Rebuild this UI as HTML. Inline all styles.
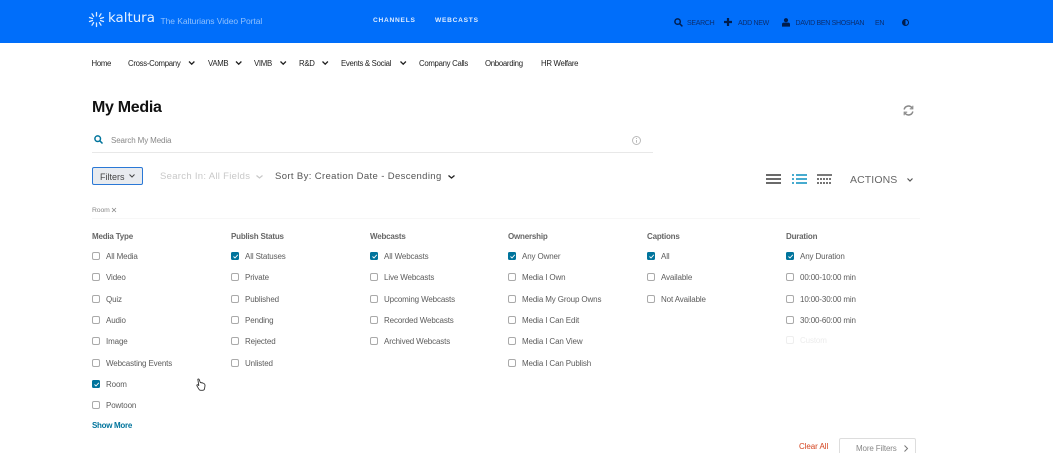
<!DOCTYPE html>
<html><head><meta charset="utf-8"><style>
html,body{margin:0;padding:0;background:#fff}
body{width:1053px;height:453px;overflow:hidden;position:relative;font-family:"Liberation Sans",sans-serif;color:#5c5c5c}
#w{position:absolute;left:0;top:0;width:1053px;height:453px;overflow:hidden;filter:blur(.3px)}
.t{position:absolute;white-space:nowrap;line-height:12px;height:12px;font-size:8px;margin-top:1px;letter-spacing:-.13px}
.c{position:absolute;width:6px;height:6px;border:1px solid #aaa;border-radius:2px;background:#fff}
.k{position:absolute;width:8px;height:8px;border-radius:1.5px;background:#00749c}
.k svg{position:absolute;left:-.5px;top:-.5px}
.h{font-weight:bold;color:#666;letter-spacing:-.2px}
.n{color:#222;font-size:7.8px;letter-spacing:-.3px}
.d{font-size:7px;color:#0b2f70;letter-spacing:-.3px}
svg{position:absolute;overflow:visible}
</style></head><body><div id="w">
<div style="position:absolute;left:0;top:0;width:1053px;height:43px;background:#006efa"></div>
<svg style="left:88px;top:11px" width="17" height="17" viewBox="0 0 17 17" stroke="#dcebff" stroke-width="1.3" stroke-linecap="round"><path d="M8.5 1.5v3.5M8.5 12v3.5M1.5 6.5l3 1M1.5 10.5l3-1M15.5 6.5l-3 1M15.5 10.500l-3-1M4 2.8l1.6 2.6M13 2.8l-1.6 2.6M4 14.2l1.6-2.6M13 14.200l-1.6-2.6"/></svg>
<div class="t" style="left:108px;top:9px;line-height:18px;height:18px;font-family:'DejaVu Sans',sans-serif;font-size:13.4px;color:#e6f1ff;letter-spacing:0">kaltura</div>
<div class="t" style="left:160.500px;top:14px;font-size:8.5px;color:#8fc0fd;letter-spacing:-.06px">The Kalturians Video Portal</div>
<div class="t" style="left:373px;top:14px;font-size:6.6px;font-weight:bold;color:#dcebff;letter-spacing:.75px">CHANNELS</div>
<div class="t" style="left:435px;top:14px;font-size:6.6px;font-weight:bold;color:#dcebff;letter-spacing:.75px">WEBCASTS</div>
<svg style="left:674px;top:18px" width="9" height="9" viewBox="0 0 9 9" fill="none" stroke="#001d4d" stroke-width="1.5"><circle cx="3.6" cy="3.6" r="2.7"/><path d="M5.6 5.6L8.4 8.4"/></svg>
<div class="t d" style="left:687px;top:16.500px">SEARCH</div>
<svg style="left:724px;top:18px" width="8" height="8" viewBox="0 0 8 8" stroke="#001d4d" stroke-width="2.2"><path d="M4 0v8M0 4h8"/></svg>
<div class="t d" style="left:738px;top:16.500px">ADD NEW</div>
<svg style="left:782px;top:18px" width="8" height="9" viewBox="0 0 8 9" fill="#001d4d"><circle cx="4" cy="2.2" r="2.1"/><path d="M0 8.6V6.2Q0 4.8 1.6 4.6H6.4Q8 4.8 8 6.2V8.6z"/></svg>
<div class="t d" style="left:795.500px;top:16.500px">DAVID BEN SHOSHAN</div>
<div class="t d" style="left:875px;top:16.500px">EN</div>
<svg style="left:902px;top:19px" width="7" height="7" viewBox="0 0 7 7"><circle cx="3.5" cy="3.500" r="3" fill="none" stroke="#001d4d"/><path d="M3.500 .5A3 3 0 0 0 3.500 6.500z" fill="#001d4d"/></svg>

<div class="t n" style="left:91.500px;top:57px">Home</div>
<div class="t n" style="left:128px;top:57px">Cross-Company</div>
<div class="t n" style="left:208px;top:57px">VAMB</div>
<div class="t n" style="left:254px;top:57px">VIMB</div>
<div class="t n" style="left:299px;top:57px">R&amp;D</div>
<div class="t n" style="left:341px;top:57px">Events &amp; Social</div>
<div class="t n" style="left:419px;top:57px">Company Calls</div>
<div class="t n" style="left:485px;top:57px">Onboarding</div>
<div class="t n" style="left:541px;top:57px">HR Welfare</div>
<svg width="1053" height="453" style="left:0;top:0" fill="none" stroke="#222" stroke-width="1.3"><path d="M189 61.500l2.700 2.700 2.700-2.700M236 61.500l2.700 2.700 2.700-2.700M280.500 61.500l2.700 2.700 2.700-2.700M322.500 61.500l2.700 2.700 2.700-2.700M400.500 61.500l2.700 2.700 2.700-2.700"/></svg>

<div class="t" style="left:92px;top:95.500px;line-height:21px;height:21px;font-size:16px;font-weight:bold;color:#111;letter-spacing:-.3px">My Media</div>
<svg style="left:903px;top:105px" width="11" height="11" viewBox="0 0 11 11" fill="none" stroke="#888" stroke-width="1.5"><path d="M1.200 4.500A4.300 4.300 0 0 1 9 3M9.800 6.500A4.300 4.300 0 0 1 2 8"/><path d="M9.800 .8V3.800H6.800M1.200 10.200V7.200H4.200" stroke-width="1.100"/></svg>
<svg style="left:94px;top:135px" width="9" height="9" viewBox="0 0 9 9" fill="none" stroke="#00749c" stroke-width="1.500"><circle cx="3.700" cy="3.700" r="2.800"/><path d="M5.700 5.700L8.500 8.500"/></svg>
<div class="t" style="left:111px;top:134px;color:#888;font-size:8px;letter-spacing:-.13px">Search My Media</div>
<svg style="left:632px;top:136px" width="9" height="9" viewBox="0 0 9 9" fill="none" stroke="#bbb"><circle cx="4.500" cy="4.500" r="4"/><path d="M4.500 4v2.800M4.500 2v1"/></svg>
<div style="position:absolute;left:92px;top:152px;width:561px;height:1px;background:#e8e8e8"></div>

<div style="position:absolute;left:92px;top:167px;width:49px;height:16px;border:1px solid #2a78d6;border-radius:2px;background:#e8ebef"></div>
<div class="t" style="left:100px;top:170px;font-size:9px;color:#444;letter-spacing:0">Filters</div>
<svg style="left:128.500px;top:174px" width="6" height="4" fill="none" stroke="#444"><path d="M.5 .5L3 3 5.500 .5"/></svg>
<div class="t" style="left:160px;top:170px;font-size:9.500px;color:#c8c8c8;letter-spacing:.3px">Search In: All Fields</div>
<svg style="left:255.500px;top:174.500px" width="7" height="4" fill="none" stroke="#c8c8c8" stroke-width="1.200"><path d="M.5 .5L3.500 3 6.500 .5"/></svg>
<div class="t" style="left:275px;top:170px;font-size:9.500px;color:#555;letter-spacing:.37px">Sort By: Creation Date - Descending</div>
<svg style="left:448px;top:174.500px" width="7" height="4" fill="none" stroke="#222" stroke-width="1.300"><path d="M.5 .5L3.500 3 6.500 .5"/></svg>

<svg style="left:766px;top:174px" width="15" height="10" stroke="#111" stroke-width="1.300"><path d="M0 1h15M0 5h15M0 9h15"/></svg>
<svg style="left:792px;top:174px" width="15" height="10" stroke="#0a8fbf" stroke-width="1.500"><path d="M0 1h2M4 1h11M0 5h2M4 5h11M0 9h2M4 9h11"/></svg>
<svg style="left:817px;top:174px" width="15" height="10" stroke="#222" stroke-width="1.200"><path d="M0 1h15"/><path d="M0 5h15M0 9h15" stroke-dasharray="2 1"/></svg>
<div class="t" style="left:850px;top:173px;font-size:10.500px;color:#666;letter-spacing:.1px">ACTIONS</div>
<svg style="left:907px;top:178px" width="6" height="4" fill="none" stroke="#555" stroke-width="1.200"><path d="M.5 .5L3 3 5.500 .5"/></svg>

<div class="t" style="left:92px;top:203.500px;font-size:6.800px;color:#888;letter-spacing:-.1px">Room</div>
<svg style="left:112px;top:208px" width="4" height="4" stroke="#888" stroke-width=".8"><path d="M0 0L4 4M4 0L0 4"/></svg>
<div style="position:absolute;left:92px;top:218px;width:828px;height:1px;background:#f7f7f7"></div>

<div class="t h" style="left:92px;top:230px">Media Type</div>
<div class="t h" style="left:231px;top:230px">Publish Status</div>
<div class="t h" style="left:370px;top:230px">Webcasts</div>
<div class="t h" style="left:508px;top:230px">Ownership</div>
<div class="t h" style="left:647px;top:230px">Captions</div>
<div class="t h" style="left:786px;top:230px">Duration</div>

<!-- Media Type -->
<div class="c" style="left:92px;top:252px"></div><div class="t" style="left:106px;top:250px">All Media</div>
<div class="c" style="left:92px;top:273px"></div><div class="t" style="left:106px;top:271px">Video</div>
<div class="c" style="left:92px;top:295px"></div><div class="t" style="left:106px;top:293px">Quiz</div>
<div class="c" style="left:92px;top:316px"></div><div class="t" style="left:106px;top:314px">Audio</div>
<div class="c" style="left:92px;top:337px"></div><div class="t" style="left:106px;top:335px">Image</div>
<div class="c" style="left:92px;top:359px"></div><div class="t" style="left:106px;top:357px">Webcasting Events</div>
<div class="k" style="left:92px;top:380px"><svg width="9" height="9" fill="none" stroke="#fff" stroke-width=".9"><path d="M2.500 4.500L4 6 6.800 2.800"/></svg></div><div class="t" style="left:106px;top:378px">Room</div>
<div class="c" style="left:92px;top:401px"></div><div class="t" style="left:106px;top:399px">Powtoon</div>
<div class="t" style="left:92px;top:419px;color:#00749c;font-weight:bold;font-size:8px;letter-spacing:-.3px">Show More</div>

<!-- Publish Status -->
<div class="k" style="left:231px;top:252px"><svg width="9" height="9" fill="none" stroke="#fff" stroke-width=".9"><path d="M2.500 4.500L4 6 6.800 2.800"/></svg></div><div class="t" style="left:245px;top:250px">All Statuses</div>
<div class="c" style="left:231px;top:273px"></div><div class="t" style="left:245px;top:271px">Private</div>
<div class="c" style="left:231px;top:295px"></div><div class="t" style="left:245px;top:293px">Published</div>
<div class="c" style="left:231px;top:316px"></div><div class="t" style="left:245px;top:314px">Pending</div>
<div class="c" style="left:231px;top:337px"></div><div class="t" style="left:245px;top:335px">Rejected</div>
<div class="c" style="left:231px;top:359px"></div><div class="t" style="left:245px;top:357px">Unlisted</div>

<!-- Webcasts -->
<div class="k" style="left:370px;top:252px"><svg width="9" height="9" fill="none" stroke="#fff" stroke-width=".9"><path d="M2.500 4.500L4 6 6.800 2.800"/></svg></div><div class="t" style="left:384px;top:250px">All Webcasts</div>
<div class="c" style="left:370px;top:273px"></div><div class="t" style="left:384px;top:271px">Live Webcasts</div>
<div class="c" style="left:370px;top:295px"></div><div class="t" style="left:384px;top:293px">Upcoming Webcasts</div>
<div class="c" style="left:370px;top:316px"></div><div class="t" style="left:384px;top:314px">Recorded Webcasts</div>
<div class="c" style="left:370px;top:337px"></div><div class="t" style="left:384px;top:335px">Archived Webcasts</div>

<!-- Ownership -->
<div class="k" style="left:508px;top:252px"><svg width="9" height="9" fill="none" stroke="#fff" stroke-width=".9"><path d="M2.500 4.500L4 6 6.800 2.800"/></svg></div><div class="t" style="left:522px;top:250px">Any Owner</div>
<div class="c" style="left:508px;top:273px"></div><div class="t" style="left:522px;top:271px">Media I Own</div>
<div class="c" style="left:508px;top:295px"></div><div class="t" style="left:522px;top:293px">Media My Group Owns</div>
<div class="c" style="left:508px;top:316px"></div><div class="t" style="left:522px;top:314px">Media I Can Edit</div>
<div class="c" style="left:508px;top:337px"></div><div class="t" style="left:522px;top:335px">Media I Can View</div>
<div class="c" style="left:508px;top:359px"></div><div class="t" style="left:522px;top:357px">Media I Can Publish</div>

<!-- Captions -->
<div class="k" style="left:647px;top:252px"><svg width="9" height="9" fill="none" stroke="#fff" stroke-width=".9"><path d="M2.500 4.500L4 6 6.800 2.800"/></svg></div><div class="t" style="left:661px;top:250px">All</div>
<div class="c" style="left:647px;top:273px"></div><div class="t" style="left:661px;top:271px">Available</div>
<div class="c" style="left:647px;top:295px"></div><div class="t" style="left:661px;top:293px">Not Available</div>

<!-- Duration -->
<div class="k" style="left:786px;top:252px"><svg width="9" height="9" fill="none" stroke="#fff" stroke-width=".9"><path d="M2.500 4.500L4 6 6.800 2.800"/></svg></div><div class="t" style="left:800px;top:250px">Any Duration</div>
<div class="c" style="left:786px;top:273px"></div><div class="t" style="left:800px;top:271px">00:00-10:00 min</div>
<div class="c" style="left:786px;top:295px"></div><div class="t" style="left:800px;top:293px">10:00-30:00 min</div>
<div class="c" style="left:786px;top:316px"></div><div class="t" style="left:800px;top:314px">30:00-60:00 min</div>
<div class="c" style="left:786px;top:336px;border-color:#eee"></div><div class="t" style="left:800px;top:334px;color:#ececec">Custom</div>

<!-- Cursor -->
<svg style="left:196px;top:378px" width="10" height="13" viewBox="0 0 10 13" fill="#fff" stroke="#333" stroke-width=".9" stroke-linejoin="round"><path d="M1.800 1.200Q2.800 .6 3.200 1.600L4.300 4.500 6.800 5Q9.200 5.700 9 7.800L8.500 10.800Q8.200 12.300 6.500 12.300H4.600Q3.500 12.300 2.900 11.200L.9 7.800Q.6 6.800 1.600 6.700L2.800 7.500z"/></svg>

<div class="t" style="left:799px;top:439.500px;color:#d4431e;font-size:8px;letter-spacing:-.07px">Clear All</div>
<div style="position:absolute;left:839px;top:438px;width:75px;height:20px;border:1px solid #ddd;border-radius:2px;background:#fff"></div>
<div class="t" style="left:856px;top:441.500px;color:#888;font-size:8px">More Filters</div>
<svg style="left:904px;top:445px" width="4" height="7" fill="none" stroke="#777"><path d="M.5 .5L3.500 3.500 .5 6.500"/></svg>
</div></body></html>
